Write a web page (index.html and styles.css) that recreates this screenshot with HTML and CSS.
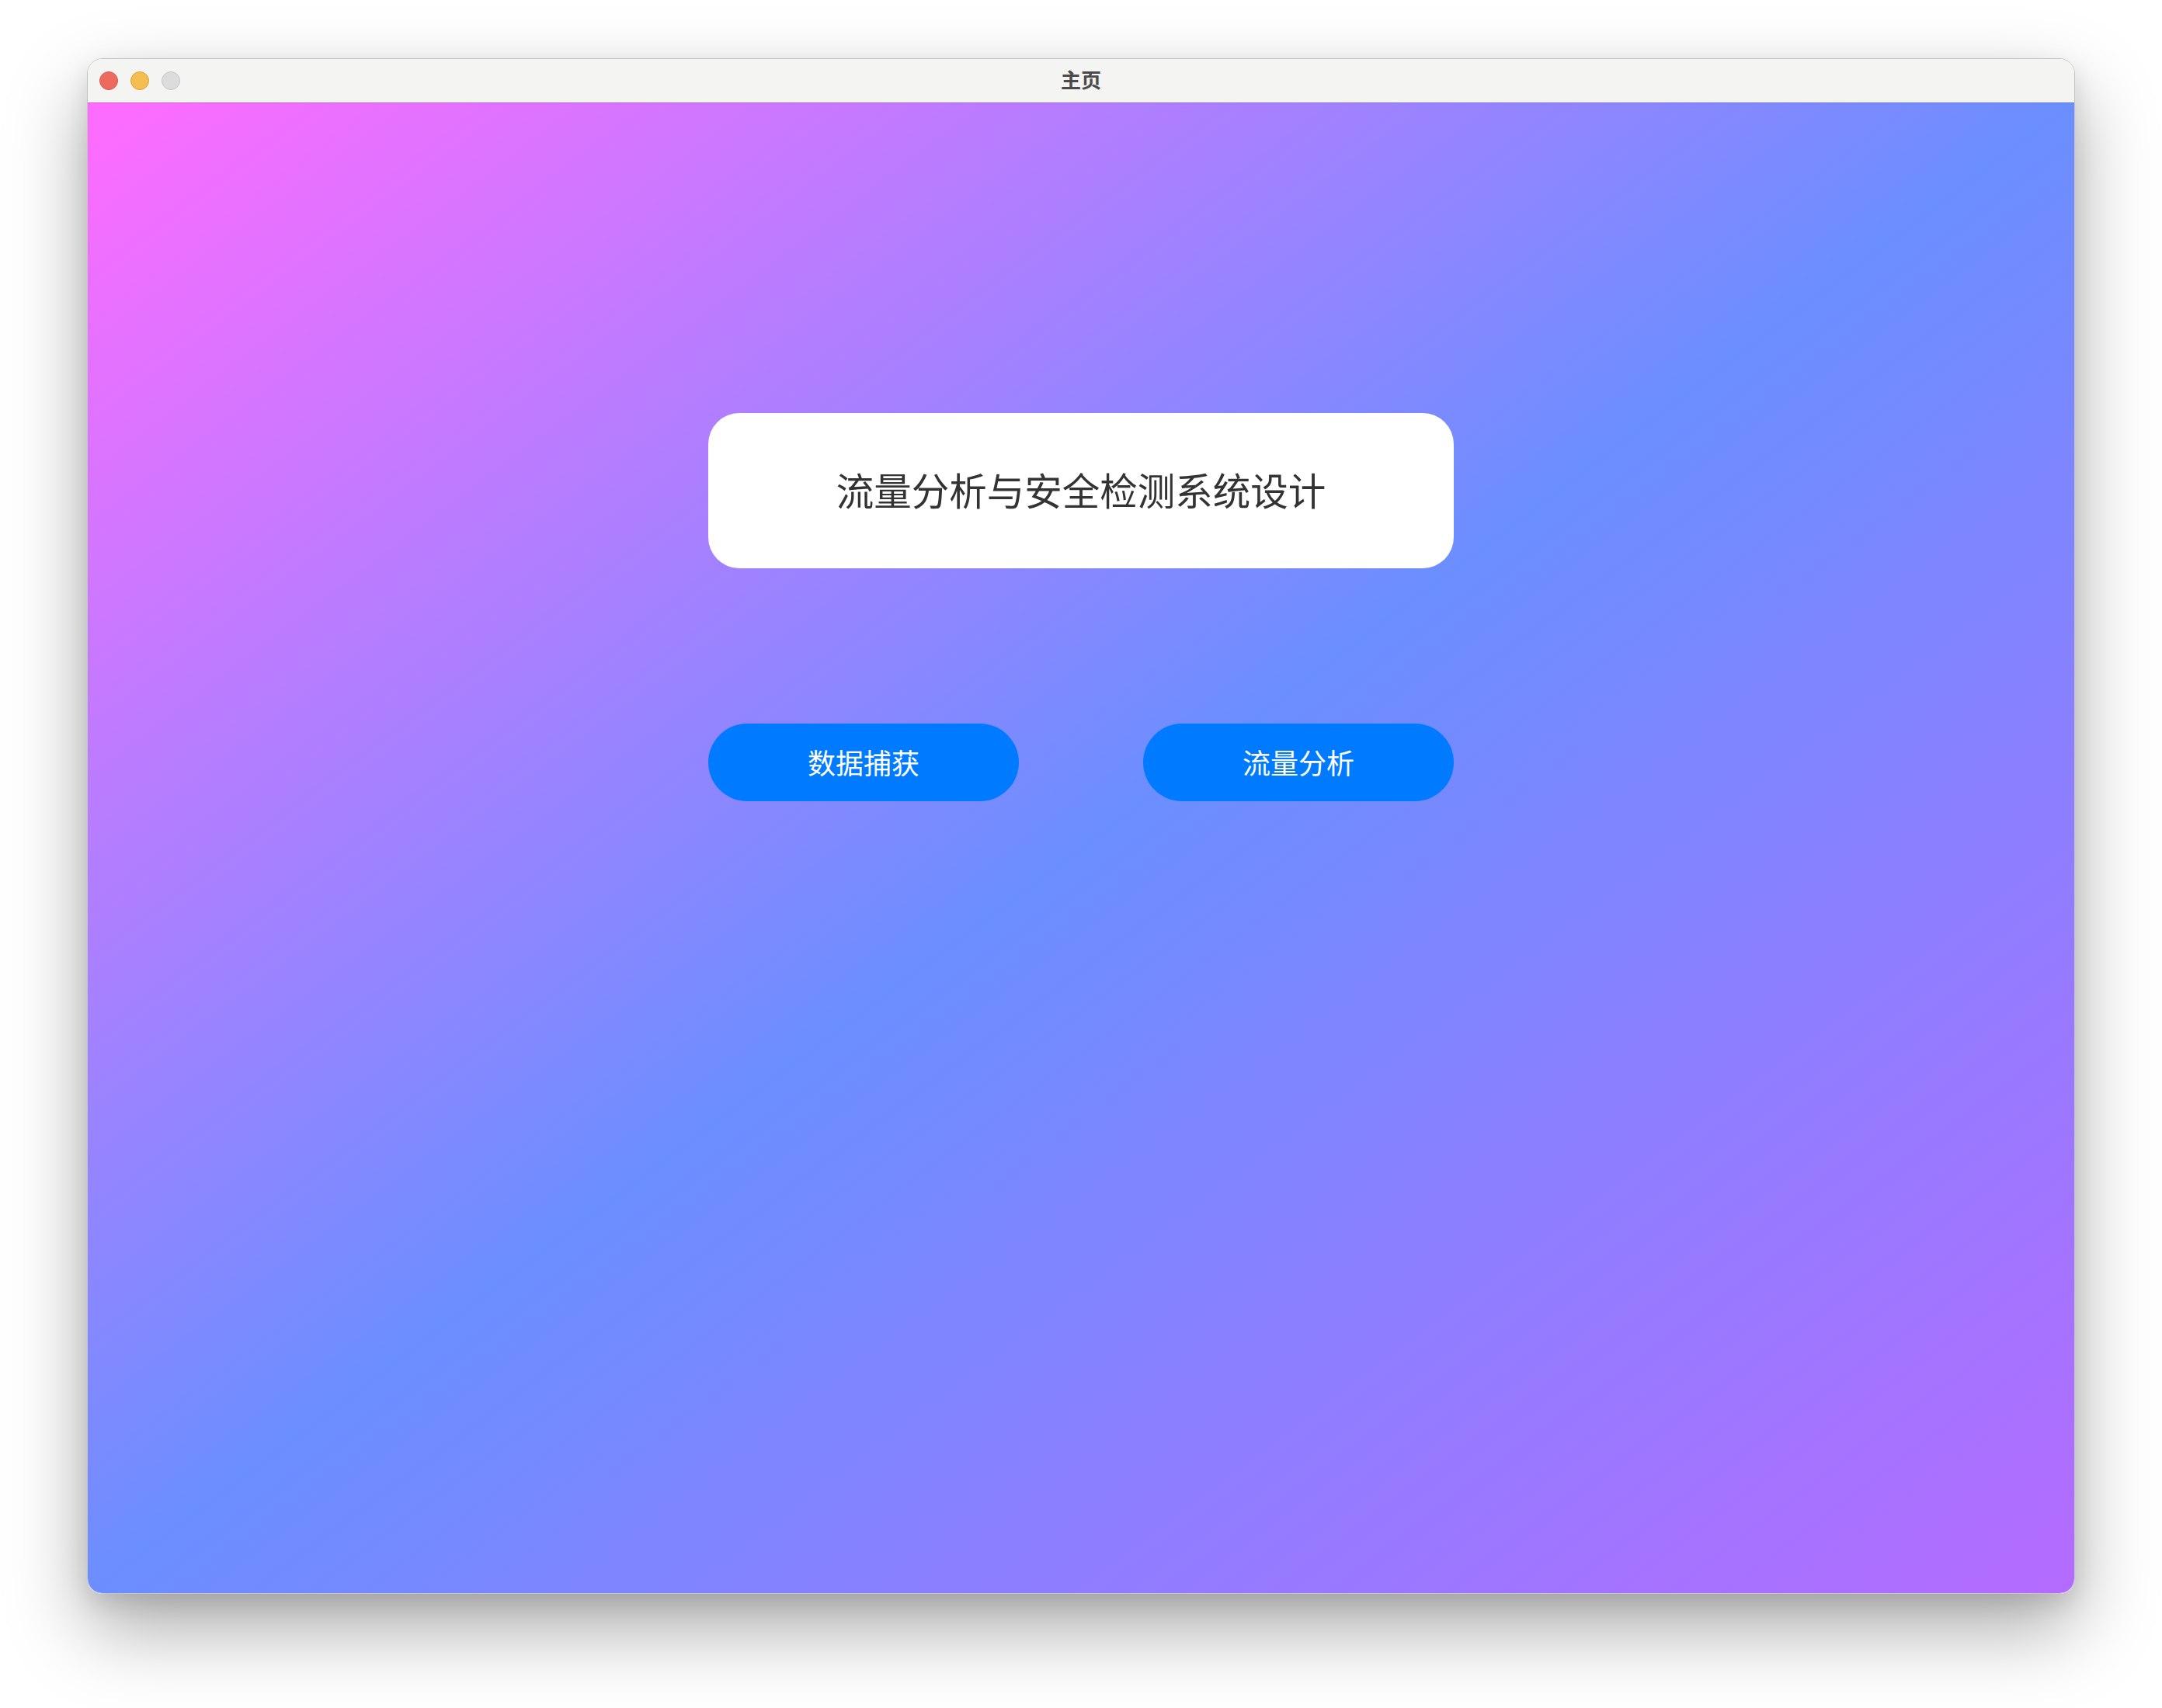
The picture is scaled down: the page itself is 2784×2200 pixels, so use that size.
FILE: index.html
```html
<!DOCTYPE html>
<html lang="zh-CN">
<head>
<meta charset="utf-8">
<title>主页</title>
<link rel="stylesheet" href="styles.css">
</head>
<body>
<div class="window">
  <div class="titlebar">
    <div class="lights">
      <span class="light red"></span>
      <span class="light yellow"></span>
      <span class="light grey"></span>
    </div>
    <div class="title">主页</div>
  </div>
  <div class="content">
    <div class="card">流量分析与安全检测系统设计</div>
    <div class="actions">
      <button class="btn">数据捕获</button>
      <button class="btn">流量分析</button>
    </div>
  </div>
</div>
</body>
</html>
```

FILE: styles.css
```css
html, body {
  margin: 0;
  padding: 0;
  background: #ffffff;
}
body {
  padding: 75px 0 0 112px;
  height: 2200px;
  box-sizing: border-box;
  overflow: hidden;
  font-family: "Noto Sans CJK SC", "Noto Sans", sans-serif;
}
.window {
  width: 2560px;
  box-sizing: border-box;
  border: 1px solid #c4c4c4;
  border-radius: 20px;
  overflow: hidden;
  box-shadow: 0 44px 100px rgba(0, 0, 0, 0.34), 0 12px 30px rgba(0, 0, 0, 0.10);
}
.titlebar {
  position: relative;
  height: 56px;
  background: #f4f4f3;
  display: flex;
  align-items: center;
  justify-content: center;
}
.lights {
  position: absolute;
  left: 15px;
  top: 16px;
  display: flex;
  gap: 16px;
}
.light {
  width: 24px;
  height: 24px;
  border-radius: 50%;
  box-sizing: border-box;
  display: block;
}
.red { background: #ee6a5f; border: 1px solid #d6574c; }
.yellow { background: #f6be50; border: 1px solid #d9a23a; }
.grey { background: #dcdcdc; border: 1px solid #c5c5c5; }
.title {
  font-size: 26px;
  font-weight: 700;
  color: #4a4a4a;
  line-height: 1;
  margin-top: -4px;
}
.content {
  height: 1920px;
  background: linear-gradient(to bottom right, #ff6bff 0%, #6b8eff 50%, #b46bff 100%);
  box-shadow: inset 0 1px 0 rgba(0, 0, 0, 0.15);
  padding-top: 400px;
  box-sizing: border-box;
  display: flex;
  flex-direction: column;
  align-items: center;
}
.card {
  width: 960px;
  height: 200px;
  box-sizing: border-box;
  padding-bottom: 4px;
  background: #ffffff;
  border-radius: 40px;
  display: flex;
  align-items: center;
  justify-content: center;
  font-size: 48.5px;
  color: #333333;
}
.actions {
  margin-top: 200px;
  display: flex;
  gap: 160px;
}
.btn {
  width: 400px;
  height: 100px;
  border: none;
  border-radius: 50px;
  background: #007aff;
  color: #ffffff;
  font-family: "Noto Sans CJK SC", "Noto Sans", sans-serif;
  font-size: 36px;
  padding: 0 0 3px 0;
}
```
